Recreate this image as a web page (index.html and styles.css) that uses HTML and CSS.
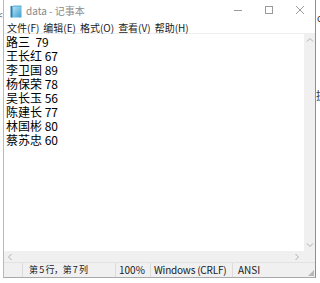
FILE: index.html
```html
<!DOCTYPE html>
<html lang="zh-CN">
<head>
<meta charset="utf-8">
<title>data - 记事本</title>
<link rel="stylesheet" href="styles.css">
</head>
<body>
<div class="desk">
  <span class="peek peek-lt">&lt;</span>
  <span class="peek peek-rc">c</span>
  <span class="peek peek-rt">提</span>
  <span class="peek peek-bt">一 ·</span>
</div>
<div class="window">
  <div class="titlebar">
    <svg class="app-icon" width="12" height="13" viewBox="0 0 12 13">
      <defs>
        <linearGradient id="g" x1="0" y1="0" x2="1" y2="1">
          <stop offset="0" stop-color="#bfe6f7"/>
          <stop offset="1" stop-color="#3b9fd0"/>
        </linearGradient>
      </defs>
      <rect x="1.5" y="1" width="10" height="11.5" fill="url(#g)"/>
      <rect x="0.5" y="1" width="2" height="11.5" fill="#2b7fae"/>
      <rect x="3" y="0.5" width="8.5" height="1.2" fill="#5fb4de"/>
    </svg>
    <span class="title">data - 记事本</span>
    <div class="controls">
      <span class="ctl"><svg width="10" height="10" viewBox="0 0 10 10"><path d="M1 5.5H9" stroke="#9a9a9a" stroke-width="1"/></svg></span>
      <span class="ctl"><svg width="10" height="10" viewBox="0 0 10 10"><rect x="1.5" y="1.5" width="7" height="7" fill="none" stroke="#9a9a9a" stroke-width="1"/></svg></span>
      <span class="ctl"><svg width="10" height="10" viewBox="0 0 10 10"><path d="M1 1L9 9M9 1L1 9" stroke="#9a9a9a" stroke-width="1"/></svg></span>
    </div>
  </div>
  <div class="menubar">
    <span class="menu">文件(F)</span>
    <span class="menu">编辑(E)</span>
    <span class="menu">格式(O)</span>
    <span class="menu">查看(V)</span>
    <span class="menu">帮助(H)</span>
  </div>
  <div class="body">
    <div class="editor">
      <div class="line">路三&nbsp;&nbsp;79</div>
      <div class="line">王长红 67</div>
      <div class="line">李卫国 89</div>
      <div class="line">杨保荣 78</div>
      <div class="line">吴长玉 56</div>
      <div class="line">陈建长 77</div>
      <div class="line">林国彬 80</div>
      <div class="line">蔡苏忠 60</div>
    </div>
    <div class="vscroll">
      <svg width="8" height="6" viewBox="0 0 8 6"><path d="M1 4.5L4 1.5L7 4.5" fill="none" stroke="#b0b0b0" stroke-width="1"/></svg>
      <svg width="8" height="6" viewBox="0 0 8 6"><path d="M1 1.5L4 4.5L7 1.5" fill="none" stroke="#b0b0b0" stroke-width="1"/></svg>
    </div>
  </div>
  <div class="hrow">
    <div class="hscroll">
      <svg width="6" height="8" viewBox="0 0 6 8"><path d="M4.5 1L1.5 4L4.5 7" fill="none" stroke="#b0b0b0" stroke-width="1"/></svg>
      <svg width="6" height="8" viewBox="0 0 6 8"><path d="M1.5 1L4.5 4L1.5 7" fill="none" stroke="#b0b0b0" stroke-width="1"/></svg>
    </div>
    <div class="corner"></div>
  </div>
  <div class="statusbar">
    <span class="cell cell-blank"></span>
    <span class="cell cell-pos">第 5 行，第 7 列</span>
    <span class="cell cell-zoom">100%</span>
    <span class="cell cell-eol">Windows (CRLF)</span>
    <span class="cell cell-enc">ANSI</span>
    <svg class="grip" width="6" height="6" viewBox="0 0 6 6"><path d="M6 0V6H0Z" fill="#b8b8b8"/></svg>
  </div>
</div>
</body>
</html>
```
FILE: styles.css
```css
* { box-sizing: border-box; }
html, body {
  margin: 0;
  padding: 0;
  width: 320px;
  height: 283px;
  overflow: hidden;
  background: #ffffff;
  font-family: "Noto Sans CJK SC", "Noto Sans", sans-serif;
}
body { position: relative; }

.desk { position: absolute; inset: 0; }
.peek { position: absolute; color: #333; font-size: 10px; line-height: 10px; }
.peek-lt { left: -3px; top: 10px; color: #555; }
.peek-rc { left: 317px; top: 13px; }
.peek-rt { left: 316px; top: 90px; font-size: 11px; }
.peek-bt { left: 62px; top: 280px; color: #777; }

.window {
  position: relative;
  margin-left: 3px;
  width: 313px;
  height: 278px;
  background: #fff;
  border-left: 1px solid #b9b9b9;
  border-right: 1px solid #8f8f8f;
  border-bottom: 1px solid #a9a9a9;
  display: flex;
  flex-direction: column;
  font-family: "Noto Sans CJK SC", "Noto Sans", sans-serif;
}

.titlebar {
  height: 22px;
  display: flex;
  align-items: center;
  padding-left: 6px;
  flex: none;
}
.app-icon { flex: none; margin-top: 1px; }
.title {
  margin-left: 4px;
  font-size: 10px;
  color: #8a8a8a;
  line-height: 12px;
}
.controls { margin-left: auto; display: flex; height: 22px; }
.ctl {
  width: 31px;
  height: 22px;
  display: flex;
  align-items: center;
  justify-content: center;
  padding-bottom: 2px;
}

.menubar {
  height: 11px;
  display: flex;
  align-items: center;
  gap: 4px;
  padding-left: 3px;
  flex: none;
  border-bottom: 1px solid #ededed;
  box-sizing: content-box;
}
.menu { font-size: 10px; line-height: 11px; color: #1a1a1a; }

.body {
  flex: 1;
  display: flex;
  min-height: 0;
}
.editor {
  flex: 1;
  padding: 1px 0 0 2px;
  color: #000;
  font-size: 12px;
  line-height: 14px;
}
.line { height: 14px; white-space: pre; }
.vscroll {
  width: 11px;
  background: #f0f0f0;
  display: flex;
  flex-direction: column;
  justify-content: space-between;
  align-items: center;
  padding: 3px 0 3px;
}

.hrow { height: 11px; display: flex; flex: none; }
.hscroll {
  flex: 1;
  background: #f0f0f0;
  display: flex;
  justify-content: space-between;
  align-items: center;
  padding: 0 4px 0 3px;
}
.corner { width: 11px; background: #f0f0f0; }

.statusbar {
  height: 15px;
  flex: none;
  background: #f0f0f0;
  border-top: 1px solid #e2e2e2;
  display: flex;
  align-items: center;
  position: relative;
  font-size: 10px;
  color: #1a1a1a;
}
.cell {
  flex: none;
  height: 14px;
  line-height: 14px;
  border-left: 1px solid #dcdcdc;
  padding-left: 6px;
  white-space: nowrap;
  overflow: hidden;
}
.cell-blank { width: 18px; border-left: none; padding: 0; }
.cell-pos { width: 93px; font-size: 9px; letter-spacing: -0.4px; }
.cell-zoom { width: 35px; padding-left: 3px; }
.cell-eol { width: 82px; padding-left: 3px; letter-spacing: -0.2px; }
.cell-enc { width: 50px; padding-left: 5px; }
.grip { position: absolute; right: 1px; bottom: 1px; }
```
